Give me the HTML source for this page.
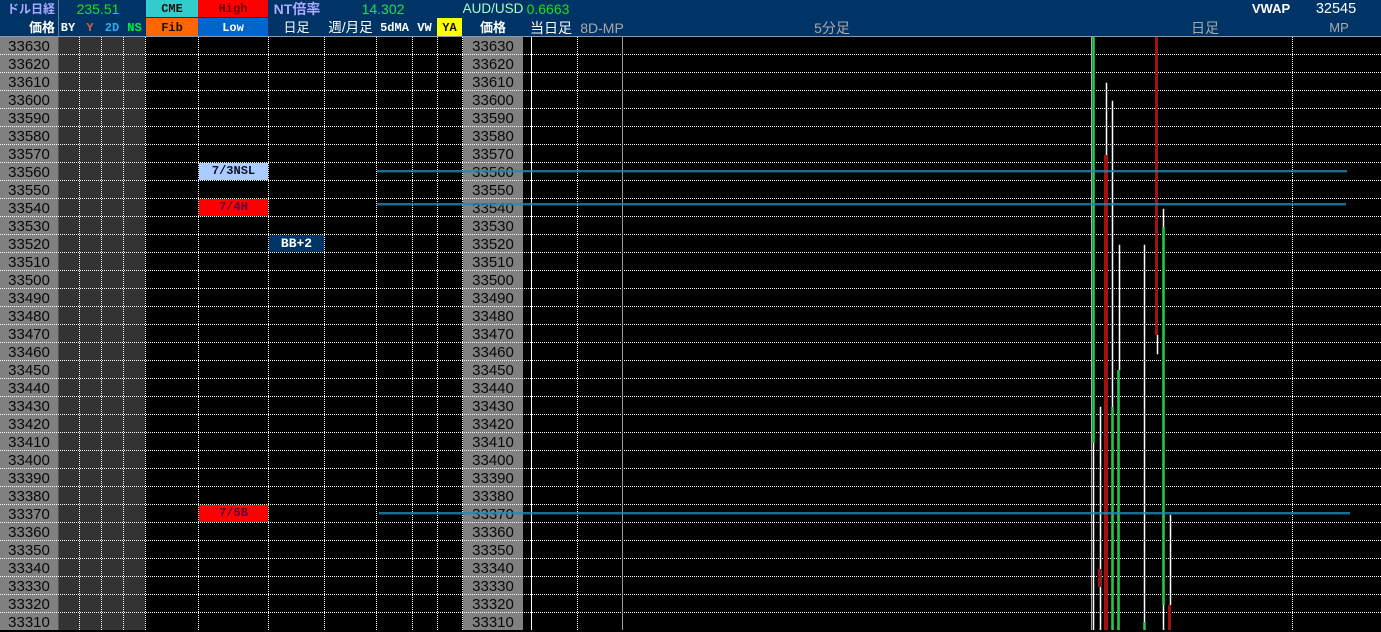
<!DOCTYPE html>
<html><head><meta charset="utf-8"><style>
html,body{margin:0;padding:0;background:#000}
body{position:relative;width:1381px;height:630px;overflow:hidden;font-family:"Liberation Sans","WenQuanYi Zen Hei",sans-serif}
div{position:absolute}
.h{white-space:nowrap;text-align:center;line-height:18px;height:18px}
.m{font-family:"Liberation Mono",monospace;font-weight:bold;font-size:12px}
.j{font-size:13px;font-family:"Liberation Sans","Noto Sans CJK JP",sans-serif}
.n{font-size:14px}
.p{font-size:15px;line-height:18px;color:#080808;text-align:center;background:#808080;top:37px;padding-top:1px;height:592px;white-space:pre}
</style></head><body>
<div style="left:0;top:0;width:1381px;height:36px;background:#003366"></div>
<div style="left:0;top:36px;width:1381px;height:1px;background:#8a9aaa"></div>
<div style="left:58px;top:0;width:1px;height:36px;background:#6a7f95"></div>
<div style="left:146px;top:0;width:52px;height:17px;background:#33cccc"></div>
<div style="left:198px;top:0;width:70px;height:17px;background:#ff0000"></div>
<div style="left:146px;top:18px;width:52px;height:18px;background:#ff6600"></div>
<div style="left:198px;top:18px;width:70px;height:18px;background:#0066cc"></div>
<div style="left:437px;top:18px;width:25px;height:18px;background:#ffff00"></div>

<div class="h j" style="left:4px;width:54px;top:0;color:#aaaaff;font-weight:bold;font-size:12px">ドル日経</div>
<div class="h n" style="left:68px;width:60px;top:0;color:#22dd22">235.51</div>
<div class="h m" style="left:146px;width:52px;top:0;color:#111">CME</div>
<div class="h m" style="left:198px;width:70px;top:0;color:#660000">High</div>
<div class="h j" style="left:268px;width:58px;top:0;color:#aaaaff;font-weight:bold;font-size:14px">NT倍率</div>
<div class="h n" style="left:353px;width:60px;top:0;color:#22dd55">14.302</div>
<div class="h n" style="left:458px;width:70px;top:0;color:#aaffcc;font-size:13.5px">AUD/USD</div>
<div class="h n" style="left:518px;width:60px;top:0;color:#22dd22">0.6663</div>
<div class="h" style="left:1241px;width:60px;top:0;color:#fff;font-size:13px;font-weight:bold">VWAP</div>
<div class="h n" style="left:1306px;width:60px;top:0;color:#fff;font-size:14.5px">32545</div>

<div class="h j" style="left:22px;width:40px;top:19px;color:#fff;font-weight:bold">価格</div>
<div class="h m" style="left:58px;width:20px;top:19px;color:#fff">BY</div>
<div class="h m" style="left:80px;width:20px;top:19px;color:#cc6633">Y</div>
<div class="h m" style="left:102px;width:20px;top:19px;color:#33aaee">2D</div>
<div class="h m" style="left:124px;width:21px;top:19px;color:#00ee44">NS</div>
<div class="h m" style="left:146px;width:52px;top:19px;color:#111">Fib</div>
<div class="h m" style="left:198px;width:70px;top:19px;color:#fff">Low</div>
<div class="h j" style="left:268px;width:57px;top:19px;color:#fff">日足</div>
<div class="h j" style="left:325px;width:51px;top:19px;color:#fff;font-size:13.5px">週/月足</div>
<div class="h m" style="left:377px;width:35px;top:19px;color:#fff">5dMA</div>
<div class="h m" style="left:412px;width:25px;top:19px;color:#fff">VW</div>
<div class="h m" style="left:437px;width:25px;top:19px;color:#111">YA</div>
<div class="h j" style="left:463px;width:60px;top:19px;color:#fff;font-weight:bold">価格</div>
<div class="h j" style="left:526px;width:50px;top:19px;color:#fff;font-size:14px">当日足</div>
<div class="h" style="left:572px;width:60px;top:19px;color:#aaaaaa;font-size:14px">8D-MP</div>
<div class="h j" style="left:802px;width:60px;top:19px;color:#aaaaaa;font-size:14px">5分足</div>
<div class="h j" style="left:1175px;width:60px;top:19px;color:#aaaaaa;font-size:14px">日足</div>
<div class="h" style="left:1309px;width:60px;top:19px;color:#aaaaaa;font-size:13px">MP</div>

<div class="p" style="left:0;width:58px">33630
33620
33610
33600
33590
33580
33570
33560
33550
33540
33530
33520
33510
33500
33490
33480
33470
33460
33450
33440
33430
33420
33410
33400
33390
33380
33370
33360
33350
33340
33330
33320
33310</div>
<div style="left:58px;top:37px;width:1px;height:593px;background:#555"></div>
<div style="left:59px;top:37px;width:86px;height:593px;background:#333"></div>
<div class="p" style="left:463px;width:60px">33630
33620
33610
33600
33590
33580
33570
33560
33550
33540
33530
33520
33510
33500
33490
33480
33470
33460
33450
33440
33430
33420
33410
33400
33390
33380
33370
33360
33350
33340
33330
33320
33310</div>

<div class="h m" style="left:199px;width:69px;top:163px;height:17px;line-height:17px;background:#aaccff;color:#112;">7/3NSL</div>
<div class="h m" style="left:199px;width:69px;top:199px;height:17px;line-height:17px;background:#ff0000;color:#550044">7/4H</div>
<div class="h m" style="left:199px;width:69px;top:505px;height:17px;line-height:17px;background:#ff0000;color:#550044">7/5B</div>
<div class="h" style="left:269px;width:55px;top:235px;height:17px;line-height:17px;background:#003366;color:#fff;font-size:13px;font-family:'Liberation Mono',monospace;font-weight:bold">BB+2</div>

<svg width="1381" height="630" style="position:absolute;left:0;top:0" shape-rendering="crispEdges">
<g stroke="#fff" stroke-width="1" stroke-dasharray="1 1">
<path d="M0 54.5H1381M0 72.5H1381M0 90.5H1381M0 108.5H1381M0 126.5H1381M0 144.5H1381M0 162.5H1381M0 180.5H1381M0 198.5H1381M0 216.5H1381M0 234.5H1381M0 252.5H1381M0 270.5H1381M0 288.5H1381M0 306.5H1381M0 324.5H1381M0 342.5H1381M0 360.5H1381M0 378.5H1381M0 396.5H1381M0 414.5H1381M0 432.5H1381M0 450.5H1381M0 468.5H1381M0 486.5H1381M0 504.5H1381M0 522.5H1381M0 540.5H1381M0 558.5H1381M0 576.5H1381M0 594.5H1381M0 612.5H1381"/>
<path d="M79.5 37V630M101.5 37V630M123.5 37V630M145.5 37V630M198.5 37V630M268.5 37V630M324.5 37V630M376.5 37V630M412.5 37V630M437.5 37V630M462.5 37V630M577.5 37V630M1292.5 37V630"/>
</g>
<path d="M531.5 37V630" stroke="#fff" stroke-width="1"/>
<path d="M622.5 37V630" stroke="#999" stroke-width="1"/>
<g fill="#fff" stroke="#fff" stroke-width=".5" shape-rendering="auto">
<rect x="1106" y="83" width="1" height="72"/>
<rect x="1112" y="101" width="1" height="306"/>
<rect x="1119" y="245" width="1" height="125"/>
<rect x="1144" y="245" width="1" height="377"/>
<rect x="1157" y="335" width="1" height="19"/>
<rect x="1163" y="209" width="1" height="18"/>
<rect x="1163" y="605" width="1" height="25"/>
<rect x="1170" y="515" width="1" height="90"/>
<rect x="1100" y="407" width="1" height="223"/>
<rect x="1093" y="443" width="1" height="187"/>
<rect x="1091" y="37" width="1" height="593" fill="#aaa" stroke="none"/>
</g>
<g fill="#1f9c3c">
<rect x="1092" y="37" width="3" height="406"/>
<rect x="1111" y="407" width="3" height="223"/>
<rect x="1117" y="370" width="3" height="260"/>
<rect x="1143" y="622" width="3" height="8"/>
<rect x="1162" y="227" width="3" height="378"/>
</g>
<g fill="#26c84c">
<rect x="1093" y="37" width="1" height="406"/>
<rect x="1112" y="407" width="1" height="223"/>
<rect x="1118" y="370" width="1" height="260"/>
<rect x="1144" y="622" width="1" height="8"/>
<rect x="1163" y="227" width="1" height="378"/>
</g>
<g fill="#a01212">
<rect x="1104" y="155" width="4" height="475"/>
<rect x="1155" y="37" width="3" height="298"/>
<rect x="1098" y="569" width="3" height="18"/>
<rect x="1168" y="605" width="3" height="25"/>
</g>
<g fill="#1e8bb5" opacity="0.8">
<rect x="377" y="170" width="970" height="2"/>
<rect x="377" y="203" width="969" height="2"/>
<rect x="379" y="512" width="971" height="2"/>
</g>
<g fill="#1e8bb5" opacity="0.35">
<rect x="377" y="172" width="970" height="1"/>
<rect x="377" y="205" width="969" height="1"/>
<rect x="379" y="514" width="971" height="1"/>
</g>
</svg>
</body></html>
